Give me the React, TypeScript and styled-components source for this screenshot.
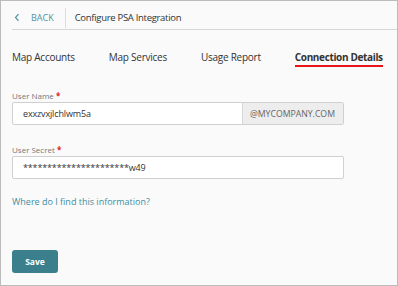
import React from "react";
import styled, { createGlobalStyle } from "styled-components";

const Global = createGlobalStyle`
  html, body { margin: 0; padding: 0; background: #fafafa; }
  * { box-sizing: border-box; }
`;

const Frame = styled.div`
  width: 398px;
  height: 286px;
  border: 1px solid #bcbcbc;
  background: #fafafa;
  font-family: "Open Sans", "Noto Sans", sans-serif;
  color: #333;
  padding-left: 11px;
  overflow: hidden;
`;

const Header = styled.div`
  display: flex;
  align-items: center;
  height: 29px;
  padding-top: 5px;
  border-bottom: 1px solid #d6d6d6;
`;

const Back = styled.a`
  display: flex;
  align-items: center;
  gap: 11px;
  color: #4c93a3;
  font-size: 9px;
  text-decoration: none;
  padding-left: 2px;
`;

const Divider = styled.div`
  width: 1px;
  height: 20px;
  background: #dcdcdc;
  margin: 0 9px 0 11px;
`;

const Title = styled.div`
  font-size: 9.5px;
  letter-spacing: -0.3px;
  color: #333;
`;

const Tabs = styled.div`
  display: flex;
  gap: 34px;
  margin-top: 20px;
  height: 18px;
`;

const Tab = styled.div<{ $active?: boolean }>`
  font-size: 10px;
  letter-spacing: ${(p) => (p.$active ? "-0.35px" : "-0.25px")};
  line-height: 15px;
  white-space: nowrap;
  color: #333;
  font-weight: ${(p) => (p.$active ? 700 : 400)};
  border-bottom: 2px solid ${(p) => (p.$active ? "#e8141a" : "transparent")};
  height: 17px;
`;

const Form = styled.div`
  display: flex;
  flex-direction: column;
  width: 332px;
  margin-top: 22px;
`;

const Fields = styled.div`
  display: flex;
  flex-direction: column;
  gap: 19px;
`;

const Field = styled.div`
  display: flex;
  flex-direction: column;
`;

const Label = styled.div`
  font-size: 8px;
  color: #777;
  line-height: 12px;
`;

const Req = styled.span`
  color: #e0242a;
  font-weight: 700;
`;

const InputRow = styled.div`
  display: flex;
  height: 23px;
  border: 1px solid #d0d0d0;
  border-radius: 2px;
  background: #fff;
  overflow: hidden;
`;

const Value = styled.div`
  flex: 1;
  display: flex;
  align-items: center;
  padding-left: 10px;
  font-size: 9px;
  letter-spacing: -0.15px;
  color: #333;
`;

const Addon = styled.div`
  display: flex;
  align-items: center;
  padding: 0 7px;
  width: 101px;
  background: #ededed;
  border-left: 1px solid #d6d6d6;
  font-size: 8.7px;
  color: #666;
`;

const Link = styled.a`
  margin-top: 16px;
  font-size: 9px;
  line-height: 13px;
  color: #3f8ea1;
  text-decoration: none;
`;

const Save = styled.button`
  display: block;
  margin-top: 42px;
  width: 46px;
  height: 23px;
  border: none;
  border-radius: 3px;
  background: #3b7f8c;
  color: #fff;
  font-family: "Open Sans", sans-serif;
  font-weight: 700;
  font-size: 8.5px;
  padding: 0;
`;

export default function App() {
  return (
    <>
      <Global />
      <Frame>
        <Header>
          <Back href="#">
            <svg width="6" height="9" viewBox="0 0 6 9">
              <path d="M4.5 1.2 L1.5 4.5 L4.5 7.8" fill="none" stroke="#4c93a3" strokeWidth="1.2" />
            </svg>
            BACK
          </Back>
          <Divider />
          <Title>Configure PSA Integration</Title>
        </Header>
        <Tabs>
          <Tab>Map Accounts</Tab>
          <Tab>Map Services</Tab>
          <Tab>Usage Report</Tab>
          <Tab $active>Connection Details</Tab>
        </Tabs>
        <Form>
          <Fields>
            <Field>
              <Label>
                User Name <Req>*</Req>
              </Label>
              <InputRow>
                <Value>exxzvxjlchlwm5a</Value>
                <Addon>@MYCOMPANY.COM</Addon>
              </InputRow>
            </Field>
            <Field>
              <Label>
                User Secret <Req>*</Req>
              </Label>
              <InputRow>
                <Value>**********************w49</Value>
              </InputRow>
            </Field>
          </Fields>
          <Link href="#">Where do I find this information?</Link>
          <Save>Save</Save>
        </Form>
      </Frame>
    </>
  );
}
